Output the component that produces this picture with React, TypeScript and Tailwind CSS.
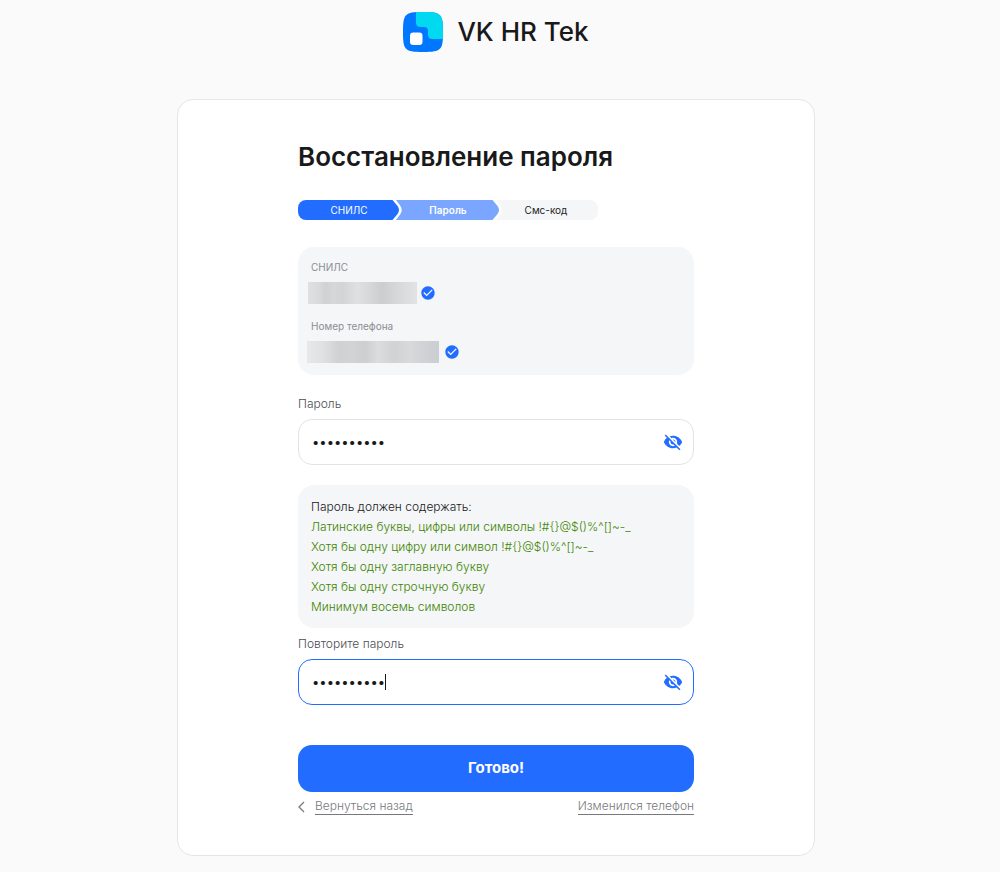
import { useState } from "react";
import { MdCheckCircle, MdVisibilityOff } from "react-icons/md";

const rules = [
  "Латинские буквы, цифры или символы !#{}@$()%^[]~-_",
  "Хотя бы одну цифру или символ !#{}@$()%^[]~-_",
  "Хотя бы одну заглавную букву",
  "Хотя бы одну строчную букву",
  "Минимум восемь символов",
];

function Logo() {
  return (
    <svg className="size-10" viewBox="0 0 40 40" aria-hidden="true">
      <path
        d="M20 0C30 0 34 0.5 36.8 3.2C39.5 6 40 10 40 20C40 30 39.5 34 36.8 36.8C34 39.5 30 40 20 40C10 40 6 39.5 3.2 36.8C0.5 34 0 30 0 20C0 10 0.5 6 3.2 3.2C6 0.5 10 0 20 0Z"
        fill="#0077ff"
      />
      <path
        d="M13 0.1C15 0 17.4 0 20 0C30 0 34 0.5 36.8 3.2C39.5 6 40 10 40 20C40 22.6 40 25 39.9 27H29.5C26.600 27 25 25.5 25 22.5V19C25 16.2 23.8 15 21 15H17.5C14.5 15 13 13.5 13 10.5Z"
        fill="#00d9f0"
      />
      <rect x="7" y="20.5" width="12.5" height="12.5" rx="3.2" fill="#fff" />
    </svg>
  );
}

function StepTip({ from, to }: { from: string; to: string }) {
  return (
    <svg className="absolute top-0 -right-1 z-10 h-5 w-3" viewBox="0 0 12 20" aria-hidden="true">
      <rect width="12" height="20" fill={to} />
      <path d="M0 0H6L10.4 6Q13 10 10.4 14L6 20H0Z" fill="#fff" />
      <path d="M0 0H2.500L7.600 6Q10.400 10 7.600 14L2.500 20H0Z" fill={from} />
    </svg>
  );
}

function Steps() {
  return (
    <ol className="mt-[25px] grid h-5 w-[300px] max-w-full grid-cols-3 overflow-hidden rounded-lg text-center text-[10px] leading-5">
      <li className="relative bg-[#226dff] pl-0.5 text-white">
        СНИЛС
        <StepTip from="#226dff" to="#7aa6ff" />
      </li>
      <li className="relative bg-[#7aa6ff] font-semibold text-white">
        Пароль
        <StepTip from="#7aa6ff" to="#f4f6f8" />
      </li>
      <li className="bg-[#f4f6f8] pr-1 text-[#232323]">Смс-код</li>
    </ol>
  );
}

function PasswordField({ id, label, focused }: { id: string; label: string; focused?: boolean }) {
  const [value, setValue] = useState("Abcdef123!");
  const [visible, setVisible] = useState(false);
  return (
    <div>
      <label htmlFor={id} className="block text-xs leading-5 font-light text-[#4c4e52]">
        {label}
      </label>
      <div
        className={
          "mt-[5px] flex h-[46px] items-center rounded-[14px] border bg-white pr-2.5 pl-[13px] " +
          (focused ? "border-[#226dff]" : "border-[#e1e3e8]")
        }
      >
        <div className="relative min-w-0 flex-1">
          <input
            id={id}
            type={visible ? "text" : "password"}
            value={value}
            onChange={(e) => setValue(e.target.value)}
            className="block w-full bg-transparent text-[13px] leading-5 text-[#19191a] outline-none"
          />
          {focused && <span className="absolute top-0.5 left-[73px] h-4 w-px bg-[#19191a]" />}
        </div>
        <button type="button" aria-label="Показать пароль" onClick={() => setVisible(!visible)} className="text-[#226dff]">
          <MdVisibilityOff className="size-5" />
        </button>
      </div>
    </div>
  );
}

export default function App() {
  return (
    <div className="min-h-screen bg-[#fafafa] px-4 pt-3 pr-6 pb-4 font-['Inter',sans-serif] text-[#19191a]">
      <header className="flex items-center justify-center gap-3.5">
        <Logo />
        <span className="text-[26px] leading-10 font-medium">VK HR Tek</span>
      </header>

      <main className="mx-auto mt-[47px] max-w-[638px] rounded-2xl border border-[#e4e6e9] bg-white pt-[39px] pb-10">
        <form className="mx-auto max-w-[396px]" onSubmit={(e) => e.preventDefault()}>
          <h1 className="text-[26px] leading-9 font-semibold">Восстановление пароля</h1>
          <Steps />

          <dl className="mt-[27px] rounded-2xl bg-[#f4f6f8] px-[13px] py-3 text-[10px] text-[#8b8d91]">
            <dt className="leading-4">СНИЛС</dt>
            <dd className="mt-[7px] -ml-[3px] flex items-center gap-[3px]">
              <span className="h-[22px] w-[109px] bg-[linear-gradient(90deg,#dfe0e2,#d9dadc_10%,#d0d1d3_16%,#d6d7d9_24%,#d3d4d6_32%,#dfe0e2_45%,#d8d9db_55%,#cccdcf_68%,#d4d5d7_78%,#dadbdd_88%,#e2e3e5)]" />
              <MdCheckCircle className="size-4 text-[#226dff]" />
            </dd>
            <dt className="mt-3.5 leading-4">Номер телефона</dt>
            <dd className="mt-[7px] -ml-1 flex items-center gap-[5px]">
              <span className="h-[22px] w-[132px] bg-[linear-gradient(90deg,#e6e8ea,#dfe1e3_12%,#cfd1d3_24%,#d2d3d5_34%,#cdced0_44%,#dbdcde_54%,#d0d2d4_66%,#d8d9db_78%,#d0d2d5_88%,#cbced2)]" />
              <MdCheckCircle className="size-4 text-[#226dff]" />
            </dd>
          </dl>

          <div className="mt-[19px]">
            <PasswordField id="password" label="Пароль" />
          </div>

          <div className="mt-5 rounded-2xl bg-[#f4f6f8] px-[13px] pt-3 pb-[11px] text-xs leading-5 font-light">
            <p>Пароль должен содержать:</p>
            <ul className="text-[#3f8500]">
              {rules.map((rule) => (
                <li key={rule}>{rule}</li>
              ))}
            </ul>
          </div>

          <div className="mt-[6px]">
            <PasswordField id="password-repeat" label="Повторите пароль" focused />
          </div>

          <button type="submit" className="mt-10 block h-[47px] w-full rounded-[14px] bg-[#226dff] text-[15px] font-bold text-white">
            Готово!
          </button>

          <div className="mt-1.5 flex items-center justify-between text-xs font-light text-[#77797d]">
            <div className="flex items-center gap-2.5">
              <svg className="h-3 w-[7px]" viewBox="0 0 7 12" fill="none" stroke="currentColor" strokeWidth="1.3" aria-hidden="true">
                <path d="M6 1L1 6L6 11" />
              </svg>
              <a href="#back" className="border-b border-current leading-4">
                Вернуться назад
              </a>
            </div>
            <a href="#phone" className="border-b border-current leading-4">
              Изменился телефон
            </a>
          </div>
        </form>
      </main>
    </div>
  );
}
